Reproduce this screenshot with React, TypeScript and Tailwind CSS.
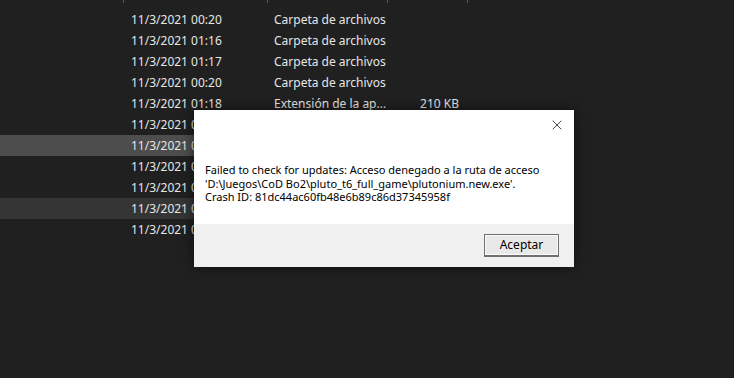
import { X } from 'lucide-react';

const rows = [
  { date: '11/3/2021 00:20', type: 'Carpeta de archivos', size: '' },
  { date: '11/3/2021 01:16', type: 'Carpeta de archivos', size: '' },
  { date: '11/3/2021 01:17', type: 'Carpeta de archivos', size: '' },
  { date: '11/3/2021 00:20', type: 'Carpeta de archivos', size: '' },
  { date: '11/3/2021 01:18', type: 'Extensión de la ap...', size: '210 KB' },
  { date: '11/3/2021 01:18', type: '', size: '' },
  { date: '11/3/2021 01:18', type: '', size: '' },
  { date: '11/3/2021 01:18', type: '', size: '' },
  { date: '11/3/2021 01:18', type: '', size: '' },
  { date: '11/3/2021 01:19', type: '', size: '' },
  { date: '11/3/2021 01:19', type: '', size: '' },
];

// rows from index 5 on sit behind the dialog, only the start of the date shows
function FileRow({ date, type, size, tone, covered }: { date: string; type: string; size: string; tone?: string; covered?: boolean }) {
  return (
    <div className={`flex h-[21px] w-[470px] items-center text-[12px] text-[#e6e6e6] ${tone ?? ''}`}>
      <span className="w-[131px] shrink-0" />
      <span className={`shrink-0 overflow-hidden whitespace-nowrap ${covered ? 'w-[63px]' : 'w-[143px]'}`}>{date}</span>
      {!covered && (
        <>
          <span className="w-[120px] shrink-0 whitespace-nowrap">{type}</span>
          <span className="w-[65px] shrink-0 whitespace-nowrap text-right">{size}</span>
        </>
      )}
    </div>
  );
}

export default function App() {
  return (
    <div className="relative h-[378px] w-[734px] overflow-hidden bg-[#202020] font-['Noto_Sans','Open_Sans',sans-serif]">
      <div className="flex h-[9px] items-start">
        <span className="ml-[123px] h-[3px] w-px bg-[#5c5c5c]" />
        <span className="ml-[143px] h-[3px] w-px bg-[#5c5c5c]" />
        <span className="ml-[119px] h-[3px] w-px bg-[#5c5c5c]" />
        <span className="ml-[79px] h-[3px] w-px bg-[#5c5c5c]" />
      </div>
      <div className="flex flex-col">
        {rows.map((r, i) => (
          <FileRow
            key={i}
            {...r}
            covered={i >= 5}
            tone={i === 6 ? 'bg-[#4d4d4d]' : i === 9 ? 'bg-[#353535]' : undefined}
          />
        ))}
      </div>

      <div className="absolute left-[194px] top-[110px] flex h-[157px] w-[380px] flex-col bg-white text-black shadow-[0_0_12px_rgba(0,0,0,0.55)]">
        <div className="relative h-[114px]">
          <button className="absolute right-[9px] top-[7px] flex h-[16px] w-[16px] items-center justify-center text-black">
            <X size={16} strokeWidth={1.1} />
          </button>
          <div className="pl-[11px] pt-[53px] text-[11px] leading-[13.5px]">
            <p>Failed to check for updates: Acceso denegado a la ruta de acceso</p>
            <p>'D:\Juegos\CoD Bo2\pluto_t6_full_game\plutonium.new.exe'.</p>
            <p>Crash ID: 81dc44ac60fb48e6b89c86d37345958f</p>
          </div>
        </div>
        <div className="flex flex-1 items-start justify-end bg-[#f0f0f0] pr-[15px] pt-[10px]">
          <button className="flex h-[23px] w-[75px] items-center justify-center border border-[#707070] border-b-2 bg-[#e9e9e9] text-[12px] text-black shadow-[inset_0_0_0_1px_#fafafa]">
            Aceptar
          </button>
        </div>
      </div>
    </div>
  );
}
